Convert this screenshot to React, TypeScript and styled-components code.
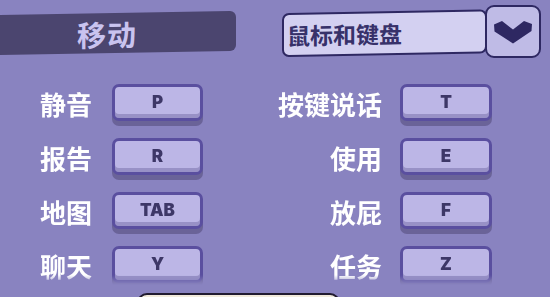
import React from 'react';
import styled, { createGlobalStyle } from 'styled-components';

const bindings = [
  { left: '静音', leftKey: 'P', right: '按键说话', rightKey: 'T' },
  { left: '报告', leftKey: 'R', right: '使用', rightKey: 'E' },
  { left: '地图', leftKey: 'TAB', right: '放屁', rightKey: 'F' },
  { left: '聊天', leftKey: 'Y', right: '任务', rightKey: 'Z' },
];

const GlobalStyle = createGlobalStyle`
  html, body {
    margin: 0;
    padding: 0;
    background: #8983c0;
    overflow: hidden;
  }
  body {
    font-family: "Noto Sans CJK SC", "Noto Sans", sans-serif;
  }
`;

const Page = styled.div`
  width: 550px;
  height: 297px;
  display: flex;
  flex-direction: column;
  overflow: hidden;
`;

const Header = styled.div`
  height: 66px;
  display: flex;
  align-items: flex-start;
  justify-content: space-between;
  padding-right: 9px;
  flex-shrink: 0;
`;

const TitleBar = styled.div`
  margin-top: 15px;
  width: 236px;
  height: 40px;
  padding-right: 22px;
  box-sizing: border-box;
  background: #4b456f;
  border-radius: 0 6px 6px 0;
  transform: skewY(-1deg);
  transform-origin: left top;
  display: flex;
  align-items: center;
  justify-content: center;
  color: #c9c3ef;
  font-size: 29px;
  font-weight: 700;
  letter-spacing: 1px;
`;

const Select = styled.div`
  margin-top: 5px;
  display: flex;
  align-items: flex-start;
`;

const SelectField = styled.div`
  margin-top: 8px;
  margin-right: -2px;
  width: 205px;
  height: 44px;
  box-sizing: border-box;
  background: #d3d0f1;
  border: 2px solid #2e2862;
  border-radius: 7px;
  transform: skewY(-1deg);
  transform-origin: left top;
  display: flex;
  align-items: center;
  padding-left: 3px;
  color: #37316a;
  font-size: 23px;
  font-weight: 700;
`;

const SelectButton = styled.div`
  width: 56px;
  height: 53px;
  box-sizing: border-box;
  background: #bfbbe6;
  border: 2.5px solid #2e2862;
  border-radius: 9px;
  display: flex;
  align-items: center;
  justify-content: center;
  position: relative;
  z-index: 1;
`;

const Bindings = styled.div`
  flex: 0 0 219px;
  padding-top: 18px;
  box-sizing: border-box;
  display: grid;
  grid-template-columns: 112px 91px 197px 92px;
  grid-auto-rows: 42px;
  row-gap: 12px;
  align-content: start;
  overflow: hidden;
  -webkit-mask-image: linear-gradient(to bottom, #000 0, #000 209px, transparent 219px);
  mask-image: linear-gradient(to bottom, #000 0, #000 209px, transparent 219px);
`;

const Label = styled.div<{ $pad: number }>`
  display: flex;
  align-items: center;
  justify-content: flex-end;
  padding-right: ${(p) => p.$pad}px;
  padding-bottom: 4px;
  color: #ffffff;
  font-size: 26px;
  font-weight: 700;
  white-space: nowrap;
`;

const Key = styled.div`
  height: 37px;
  box-sizing: border-box;
  background: #bcb6e6;
  border: 3px solid #5a4f9f;
  border-radius: 7px;
  box-shadow: inset 0 -4px 0 #9891c6, 0 5px 0 #6a6398;
  display: flex;
  align-items: center;
  justify-content: center;
  padding-bottom: 2px;
  color: #3d3767;
  font-family: Inter, "Noto Sans", sans-serif;
  font-size: 17px;
  font-weight: 900;
`;

const Footer = styled.div`
  padding-top: 8px;
  padding-left: 137px;
`;

const FooterButton = styled.div`
  width: 203px;
  height: 40px;
  box-sizing: border-box;
  background: #f2ebdc;
  border: 2px solid #211b30;
  border-radius: 10px;
`;

const Chevron = () => (
  <svg width="38" height="24" viewBox="0 0 38 24">
    <path d="M0 4.5 L8 1 L19 9.5 L30 1 L38 4 L37.5 11 L19 23.5 L0.5 11.5 Z" fill="#2e2862" />
  </svg>
);

const ControlsPage = () => {
  return (
    <Page>
      <GlobalStyle />
      <Header>
        <TitleBar>移动</TitleBar>
        <Select>
          <SelectField>鼠标和键盘</SelectField>
          <SelectButton>
            <Chevron />
          </SelectButton>
        </Select>
      </Header>

      <Bindings>
        {bindings.map((row, index) => (
          <React.Fragment key={index}>
            <Label $pad={20}>{row.left}</Label>
            <Key>{row.leftKey}</Key>
            <Label $pad={18}>{row.right}</Label>
            <Key>{row.rightKey}</Key>
          </React.Fragment>
        ))}
      </Bindings>

      <Footer>
        <FooterButton />
      </Footer>
    </Page>
  );
};

export default ControlsPage;
